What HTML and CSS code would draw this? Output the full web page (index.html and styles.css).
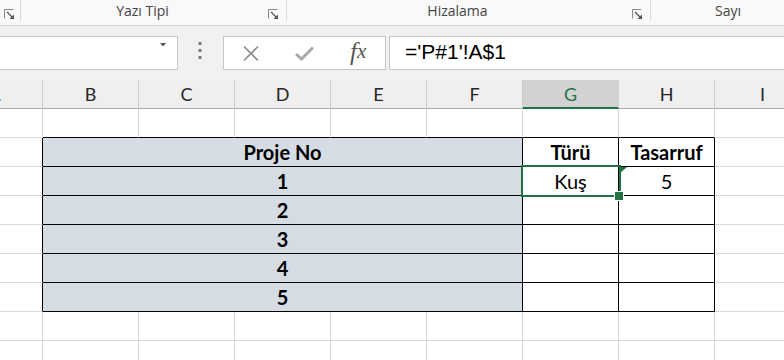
FILE: index.html
```html
<!DOCTYPE html>
<html lang="tr">
  <head>
    <meta charset="UTF-8" />
    <meta name="viewport" content="width=device-width, initial-scale=1.0" />
    <title>Tasarruf</title>
    <link rel="stylesheet" href="styles.css">
  </head>
  <body>
    <div class="ribbon">
      <div class="group g0">
        <svg class="launch" width="10" height="10" viewBox="0 0 10 10"><path d="M0.5 9.5V0.5H9.5" fill="none" stroke="#8a8a8a"/><path d="M3 3L8 8" stroke="#555" stroke-width="1.2"/><path d="M10 5.5V10H5.5z" fill="#555"/></svg>
      </div>
      <div class="group g1">
        <span class="label">Yazı Tipi</span>
        <svg class="launch" width="10" height="10" viewBox="0 0 10 10"><path d="M0.5 9.5V0.5H9.5" fill="none" stroke="#8a8a8a"/><path d="M3 3L8 8" stroke="#555" stroke-width="1.2"/><path d="M10 5.5V10H5.5z" fill="#555"/></svg>
      </div>
      <div class="group g2">
        <span class="label">Hizalama</span>
        <svg class="launch" width="10" height="10" viewBox="0 0 10 10"><path d="M0.5 9.5V0.5H9.5" fill="none" stroke="#8a8a8a"/><path d="M3 3L8 8" stroke="#555" stroke-width="1.2"/><path d="M10 5.5V10H5.5z" fill="#555"/></svg>
      </div>
      <div class="group g3">
        <span class="label">Sayı</span>
      </div>
    </div>

    <div class="formula-bar">
      <div class="name-box">
        <svg width="6" height="4" viewBox="0 0 6 4"><path d="M0 0H6L3 3.5z" fill="#555"/></svg>
      </div>
      <svg class="dots" width="4" height="17" viewBox="0 0 4 17"><rect x="0.5" y="0" width="3" height="3" fill="#777"/><rect x="0.5" y="7" width="3" height="3" fill="#777"/><rect x="0.5" y="14" width="3" height="3" fill="#777"/></svg>
      <div class="fx-box">
        <span class="fx-btn">
          <svg width="16" height="15" viewBox="0 0 16 15"><path d="M1 0.5L15 14.5M15 0.5L1 14.5" stroke="#8c8c8c" stroke-width="1.6"/></svg>
        </span>
        <span class="fx-btn">
          <svg width="19" height="15" viewBox="0 0 19 15"><path d="M1 8L6.5 13L18 1.5" fill="none" stroke="#a9a9a9" stroke-width="3"/></svg>
        </span>
        <span class="fx-btn fx-text">f<i>x</i></span>
      </div>
      <div class="formula-input">='P#1'!A$1</div>
    </div>

    <div class="sheet">
      <div class="ch">A</div>
      <div class="ch">B</div>
      <div class="ch">C</div>
      <div class="ch">D</div>
      <div class="ch">E</div>
      <div class="ch">F</div>
      <div class="ch active">G</div>
      <div class="ch">H</div>
      <div class="ch">I</div>

      <div class="c"></div>
      <div class="c top"></div>
      <div class="c top"></div>
      <div class="c top"></div>
      <div class="c top"></div>
      <div class="c top"></div>
      <div class="c top"></div>
      <div class="c top"></div>
      <div class="c"></div>

      <div class="c left"></div>
      <div class="c box shade bold span5">Proje No</div>
      <div class="c box bold">Türü</div>
      <div class="c box bold">Tasarruf</div>
      <div class="c"></div>

      <div class="c left"></div>
      <div class="c box shade bold span5">1</div>
      <div class="c box sel">Kuş</div>
      <div class="c box flag">5</div>
      <div class="c"></div>

      <div class="c left"></div>
      <div class="c box shade bold span5">2</div>
      <div class="c box"></div>
      <div class="c box"></div>
      <div class="c"></div>

      <div class="c left"></div>
      <div class="c box shade bold span5">3</div>
      <div class="c box"></div>
      <div class="c box"></div>
      <div class="c"></div>

      <div class="c left"></div>
      <div class="c box shade bold span5">4</div>
      <div class="c box"></div>
      <div class="c box"></div>
      <div class="c"></div>

      <div class="c left"></div>
      <div class="c box shade bold span5">5</div>
      <div class="c box"></div>
      <div class="c box"></div>
      <div class="c"></div>

      <div class="c"></div><div class="c"></div><div class="c"></div>
      <div class="c"></div><div class="c"></div><div class="c"></div>
      <div class="c"></div><div class="c"></div><div class="c"></div>

      <div class="c"></div><div class="c"></div><div class="c"></div>
      <div class="c"></div><div class="c"></div><div class="c"></div>
      <div class="c"></div><div class="c"></div><div class="c"></div>
    </div>
  </body>
</html>
```

FILE: styles.css
```css
* {
  box-sizing: border-box;
}
body {
  margin: 0;
  width: 784px;
  height: 360px;
  overflow: hidden;
  background-color: #f1f1f1;
  font-family: Lato, "Open Sans", sans-serif;
}

/* ribbon group labels */
.ribbon {
  display: flex;
  height: 26px;
  background-color: #f9f9f9;
  border-bottom: 1px solid #d6d6d6;
}
.group {
  display: flex;
  align-items: flex-start;
  height: 21px;
  border-right: 1px solid #dadada;
}
.group .label {
  flex: 1;
  text-align: center;
  font-family: "Open Sans", "Noto Sans", sans-serif;
  font-size: 14px;
  line-height: 22px;
  color: #444;
}
.launch {
  margin-top: 9px;
}
.g0 {
  width: 21px;
  justify-content: flex-end;
  padding-right: 6px;
}
.g1 {
  width: 266px;
  padding-right: 8px;
}
.g1 .label {
  padding-right: 4px;
}
.g2 {
  width: 364px;
  padding-right: 8px;
}
.g2 .label {
  padding-right: 4px;
}
.g3 {
  flex: 1;
  border-right: none;
}
.g3 .label {
  flex: none;
  padding-left: 64px;
}

/* formula bar */
.formula-bar {
  display: flex;
  align-items: flex-start;
  height: 54px;
  padding-top: 10px;
}
.name-box {
  display: flex;
  justify-content: flex-end;
  width: 178px;
  height: 34px;
  padding: 6px 11px 0 0;
  background-color: #fff;
  border: 1px solid #c6c6c6;
  border-left: none;
}
.dots {
  margin: 6px 0 0 20px;
}
.fx-box {
  display: flex;
  width: 163px;
  height: 34px;
  margin-left: 21px;
  background-color: #fff;
  border: 1px solid #c6c6c6;
}
.fx-btn {
  flex: 1;
  display: flex;
  justify-content: center;
  align-items: center;
}
.fx-text {
  font-family: "Liberation Serif", serif;
  font-style: italic;
  font-size: 25px;
  color: #555;
  padding-bottom: 3px;
}
.fx-text i {
  font-size: 21px;
}
.formula-input {
  flex: 1;
  height: 34px;
  margin-left: 3px;
  padding-left: 15px;
  background-color: #fff;
  border: 1px solid #c6c6c6;
  border-right: none;
  font-family: "Liberation Sans", Arial, sans-serif;
  font-size: 21px;
  line-height: 30px;
  color: #000;
}

/* sheet grid */
.sheet {
  display: grid;
  grid-template-columns: repeat(9, 96px);
  grid-auto-rows: 29px;
  margin-left: -53px;
  background-color: #fff;
}
.ch {
  background-color: #efefef;
  border-right: 1px solid #cdcdcd;
  border-bottom: 1px solid #ababab;
  text-align: center;
  font-size: 18px;
  line-height: 28px;
  color: #262626;
}
.ch.active {
  background-color: #d2d2d2;
  border-bottom: 2px solid #217346;
  color: #217346;
}
.c {
  border-right: 1px solid #d9d9d9;
  border-bottom: 1px solid #d9d9d9;
  text-align: center;
  font-size: 20px;
  line-height: 28px;
  color: #000;
}
.c.top {
  border-bottom-color: #000;
}
.c.left {
  border-right-color: #000;
}
.c.box {
  border-right-color: #000;
  border-bottom-color: #000;
}
.shade {
  background-color: #d6dce4;
}
.bold {
  font-weight: bold;
}
.span5 {
  grid-column: span 5;
}

/* active cell */
.sel {
  position: relative;
  z-index: 2;
}
.sel::after {
  content: "";
  position: absolute;
  top: -2px;
  left: -2px;
  right: -3px;
  bottom: -2px;
  border: 2px solid #217346;
}
.sel::before {
  content: "";
  position: absolute;
  left: 91px;
  top: 24px;
  width: 8px;
  height: 8px;
  background-color: #217346;
  border: 1px solid #fff;
  z-index: 1;
}
.flag {
  position: relative;
}
.flag::before {
  content: "";
  position: absolute;
  top: 0;
  left: 0;
  border-top: 7px solid #217346;
  border-right: 8px solid transparent;
}
```
